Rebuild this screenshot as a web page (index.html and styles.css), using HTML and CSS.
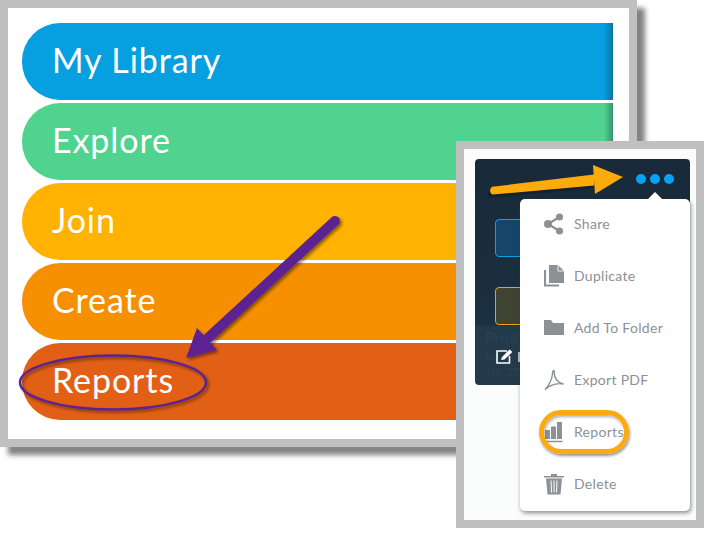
FILE: index.html
```html
<!DOCTYPE html>
<html lang="en">
<head>
    <meta charset="UTF-8">
    <meta name="viewport" content="width=device-width, initial-scale=1.0">
    <title>Reports menu</title>
    <link rel="stylesheet" href="styles.css">
</head>
<body>

    <div class="navPanel">
        <div class="navItem navBlue">My Library</div>
        <div class="navItem navGreen">Explore</div>
        <div class="navItem navYellow">Join</div>
        <div class="navItem navOrange">Create</div>
        <div class="navItem navRed">Reports</div>
    </div>

    <!-- purple arrow and ellipse -->
    <svg class="markup" width="720" height="547" viewBox="0 0 720 547">
        <defs>
            <filter id="soft" x="-20%" y="-20%" width="150%" height="150%">
                <feDropShadow dx="2" dy="2" stdDeviation="1.5" flood-color="#000" flood-opacity="0.45"/>
            </filter>
        </defs>
        <g filter="url(#soft)">
            <ellipse cx="113" cy="382.500" rx="93" ry="27" fill="none" stroke="#5c2391" stroke-width="2.500"/>
            <path d="M335 221 L208 338" fill="none" stroke="#5c2391" stroke-width="10" stroke-linecap="round"/>
            <path d="M186 358 L197 328 L217 350 Z" fill="#5c2391"/>
        </g>
    </svg>

    <div class="popPanel">
        <div class="card">
            <div class="cardSwatch swatchBlue"></div>
            <div class="cardSwatch swatchOlive"></div>
            <div class="cardTitle">Prod</div>
            <div class="cardRow">
                <span class="cardFaint cardBy">by</span>
                <svg width="18" height="15" viewBox="0 0 18 15">
                    <path d="M11 2 H1 V14 H13.500 V7" fill="none" stroke="#fff" stroke-width="1.600"/>
                    <path d="M5 11 L6 8 L13.500 0.500 L16.500 3 L8.500 10.500 Z" fill="#fff"/>
                </svg>
                <span class="cardMark"></span>
            </div>
            <div class="cardFaint cardDate">Jan 27</div>
            <div class="dots"><i></i><i></i><i></i></div>
        </div>

        <div class="menu">
            <div class="menuItem">
                <svg class="menuIcon" width="20" height="22" viewBox="0 0 20 22">
                    <path d="M15.500 4 L4 11 L15.500 18" fill="none" stroke="#8c9196" stroke-width="2.200"/>
                    <circle cx="15.500" cy="4" r="3.600" fill="#8c9196"/>
                    <circle cx="4" cy="11" r="4" fill="#8c9196"/>
                    <circle cx="15.500" cy="18" r="3.600" fill="#8c9196"/>
                </svg>
                <span>Share</span>
            </div>
            <div class="menuItem">
                <svg class="menuIcon" width="20" height="22" viewBox="0 0 20 22">
                    <path d="M5 0 H14 L20 6 V18 H5 Z" fill="#8c9196"/>
                    <path d="M1 5 V20.500 H15" fill="none" stroke="#8c9196" stroke-width="2.200"/>
                    <path d="M14 0 V6 H20" fill="none" stroke="#fff" stroke-width="0.800"/>
                </svg>
                <span>Duplicate</span>
            </div>
            <div class="menuItem">
                <svg class="menuIcon" width="20" height="22" viewBox="0 0 20 22">
                    <path d="M0 3 H7 L9 6 H20 V18 H0 Z" fill="#8c9196"/>
                </svg>
                <span>Add To Folder</span>
            </div>
            <div class="menuItem">
                <svg class="menuIcon" width="20" height="22" viewBox="0 0 20 22">
                    <path d="M1 20.500 C5 17 8 10 8.500 5 C8.700 0.500 10.500 0.500 10.300 4 C10 9 14 14 19.500 15 C15 14 6 15 1 20.500 Z" fill="none" stroke="#8c9196" stroke-width="1.400"/>
                </svg>
                <span>Export PDF</span>
            </div>
            <div class="menuItem">
                <svg class="menuIcon" width="20" height="22" viewBox="0 0 20 22">
                    <path d="M1 9 H6 V18 H1 Z M7 5.500 H12 V18 H7 Z M13 1 H18 V18 H13 Z" fill="#8c9196"/>
                    <path d="M0.500 20.500 H18.500" stroke="#8c9196" stroke-width="1.500"/>
                </svg>
                <span>Reports</span>
                <div class="highlight"></div>
            </div>
            <div class="menuItem">
                <svg class="menuIcon" width="20" height="22" viewBox="0 0 20 22">
                    <path d="M0 3 H20 V4.500 H0 Z M7 1 H13 V3 H7 Z" fill="#8c9196"/>
                    <path d="M2 5.500 H18 L16.500 21.500 H3.500 Z" fill="#8c9196"/>
                    <path d="M7 7.500 L7.500 19.500 M10 7.500 V19.500 M13 7.500 L12.500 19.500" stroke="#fff" stroke-width="1"/>
                </svg>
                <span>Delete</span>
            </div>
        </div>

        <!-- orange arrow -->
        <svg class="cardArrow" width="232" height="60" viewBox="0 0 232 60">
            <path d="M28 45 L130 35" fill="none" stroke="#10202c" stroke-width="8" stroke-linecap="round" opacity="0.7"/>
            <path d="M28 37.800 L130 25.500 L130 36.500 L28 45.600 Q24 41.500 28 37.800 Z" fill="#fdaa0c"/>
            <path d="M129 16 L159 28 L131 45 Z" fill="#fdaa0c"/>
        </svg>
    </div>

</body>
</html>
```

FILE: styles.css
```css
html, body {
    margin: 0;
    padding: 0;
    background-color: #ffffff;
}
body {
    position: relative;
    width: 720px;
    height: 547px;
    overflow: hidden;
    font-family: Lato, "Open Sans", sans-serif;
}
.navPanel {
    box-sizing: border-box;
    width: 637px;
    height: 447px;
    padding: 15px 16px 0 14px;
    background-color: #ffffff;
    border: 8px solid #c0c0c0;
    box-shadow: 8px 8px 5px rgba(90,90,90,0.75);
    display: flex;
    flex-direction: column;
    gap: 3px;
}
.navItem {
    height: 77px;
    flex-shrink: 0;
    padding-left: 30px;
    border-radius: 38px 0 0 38px;
    background-image: linear-gradient(90deg, transparent calc(100% - 9px), rgba(20,50,70,0.4));
    color: #ffffff;
    font-size: 34px;
    line-height: 73px;
    letter-spacing: 0.9px;
}
.navBlue { background-color: #069fe0; }
.navGreen { background-color: #50d38f; }
.navYellow { background-color: #ffb300; }
.navOrange { background-color: #f69000; }
.navRed { background-color: #e26016; }
.markup {
    position: absolute;
    top: 0;
    left: 0;
}
.popPanel {
    position: absolute;
    top: 141px;
    left: 456px;
    box-sizing: border-box;
    width: 248px;
    height: 387px;
    background-color: #fbfcfc;
    border: 8px solid #c0c0c0;
}
.card {
    position: absolute;
    top: 10px;
    left: 11px;
    width: 215px;
    height: 226px;
    box-sizing: border-box;
    padding: 60px 0 0 20px;
    background: linear-gradient(180deg, #182a39 0, #1b3040 165px, #223a4a 168px);
    border-radius: 4px;
}
.cardSwatch {
    width: 60px;
    height: 38px;
    margin-bottom: 30px;
    border-radius: 4px;
    box-sizing: border-box;
}
.swatchBlue {
    background-color: #15466a;
    border: 1px solid #0f9fe8;
}
.swatchOlive {
    background-color: #3f4332;
    border: 1px solid #e8a317;
}
.cardTitle {
    margin: -28px 0 0 -10px;
    color: #2b4252;
    font-size: 16px;
    line-height: 20px;
}
.cardRow {
    display: flex;
    align-items: center;
    margin: 2px 0 0 -10px;
    height: 15px;
}
.cardRow svg {
    margin-right: 4px;
}
.cardMark {
    width: 4px;
    height: 10px;
    background-color: #b8bfc4;
}
.cardFaint {
    color: #2b4252;
    font-size: 12px;
    line-height: 14px;
}
.cardBy {
    width: 11px;
    align-self: flex-end;
}
.cardDate {
    margin: 1px 0 0 -10px;
}
.dots {
    position: absolute;
    top: 15px;
    left: 161px;
    display: flex;
    gap: 4px;
}
.dots i {
    width: 10px;
    height: 10px;
    border-radius: 50%;
    background-color: #03a4f8;
}
.menu {
    position: absolute;
    top: 50px;
    left: 56px;
    width: 170px;
    height: 312px;
    background-color: #ffffff;
    border-radius: 5px;
    box-shadow: 1px 2px 4px rgba(60,60,60,0.6);
    display: flex;
    flex-direction: column;
}
.menu::before {
    content: "";
    position: absolute;
    top: -7px;
    left: 128px;
    border-left: 7px solid transparent;
    border-right: 7px solid transparent;
    border-bottom: 7px solid #ffffff;
}
.menuItem {
    position: relative;
    box-sizing: border-box;
    height: 52px;
    padding: 0 0 3px 24px;
    display: flex;
    align-items: center;
    gap: 10px;
    color: #8c9196;
    font-size: 14px;
    letter-spacing: 0.3px;
}
.menuIcon {
    flex-shrink: 0;
}
.highlight {
    position: absolute;
    top: 3px;
    left: 19px;
    width: 90px;
    height: 44px;
    box-sizing: border-box;
    border: 5px solid #fdaa0c;
    border-radius: 22px;
    box-shadow: 1px 2px 3px rgba(60,60,60,0.55), inset 1px 2px 3px rgba(60,60,60,0.4);
}
.cardArrow {
    position: absolute;
    top: 0;
    left: 0;
}
```
